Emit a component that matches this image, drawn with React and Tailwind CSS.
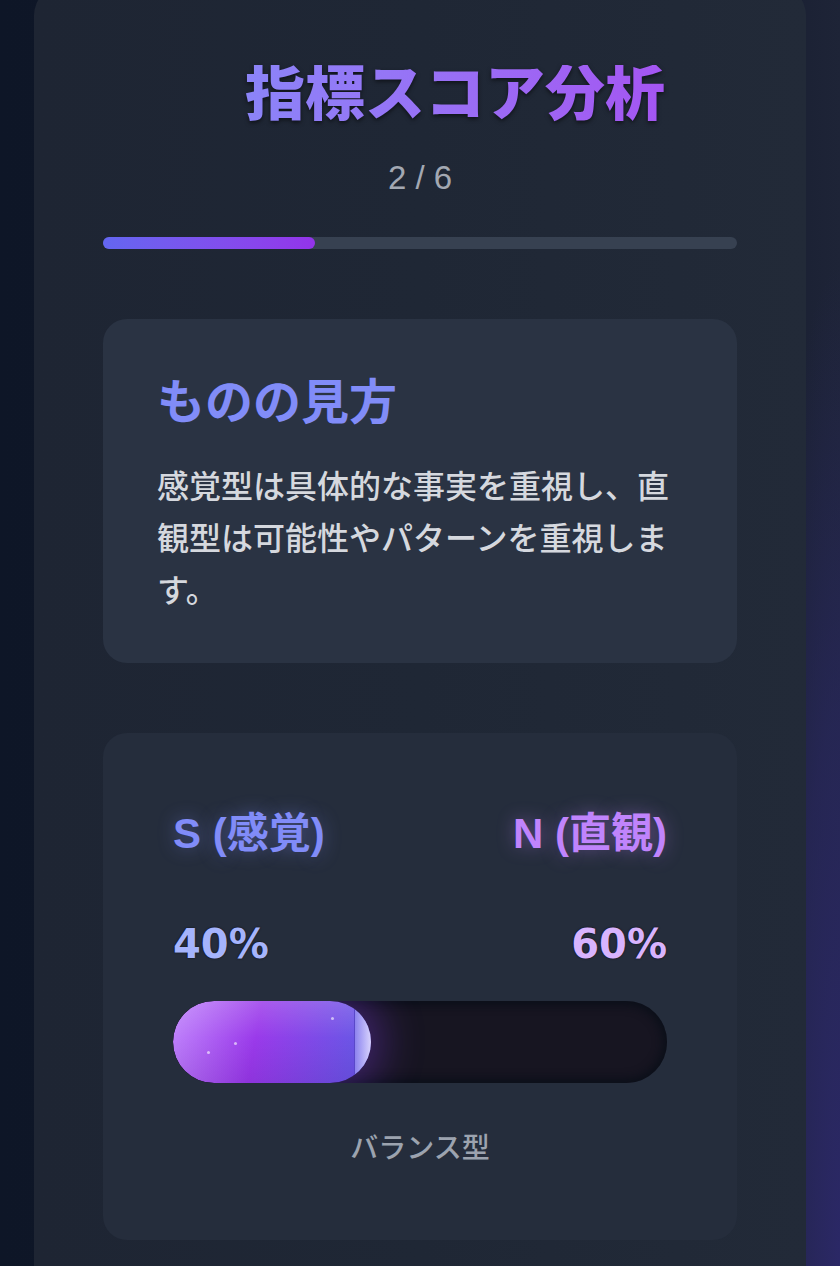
const S_PCT = 40;
const N_PCT = 60;

const sparkles = [
  { left: 34, top: 50 },
  { left: 61, top: 41 },
  { left: 158, top: 16 },
];

function ScoreBar({ value }) {
  return (
    <div className="relative h-[82px] overflow-hidden rounded-full bg-[#171521] shadow-[inset_0_0_10px_4px_rgba(8,14,24,0.85)]">
      <div
        className="relative h-full overflow-hidden rounded-full bg-[linear-gradient(180deg,rgba(255,255,255,0.16)_0%,rgba(255,255,255,0)_45%,rgba(60,0,120,0.12)_100%),linear-gradient(100deg,#c084fc_0%,#9a3aea_42%,#6c55e6_88%)] shadow-[0_0_40px_12px_rgba(126,58,220,0.4)]"
        style={{ width: `${value}%` }}
      >
        {sparkles.map((s, i) => (
          <span
            key={i}
            className="absolute h-[3px] w-[3px] rounded-full bg-white/60"
            style={{ left: s.left, top: s.top }}
          />
        ))}
        <span className="absolute inset-y-0 right-0 w-[17px] border-l border-[#5a48c9] bg-gradient-to-r from-[#8d82ee] to-[#d9d3fc]" />
      </div>
    </div>
  );
}

export default function App() {
  return (
    <div className="h-screen w-full overflow-hidden bg-[radial-gradient(90px_1000px_at_100%_100%,#2b2866_0%,rgba(43,40,102,0.6)_55%,rgba(43,40,102,0)_100%),linear-gradient(90deg,#0e1627_0%,#131a2c_80%,#1e2437_100%)] px-[34px] font-['Liberation_Sans','Noto_Sans_CJK_JP',sans-serif]">
      <div className="-mt-[16px] rounded-[32px] bg-[linear-gradient(90deg,#1e2533_0%,#1f2735_50%,#222a38_100%)] px-[69px] pt-[81px] pb-[80px]">
        <div className="flex justify-center pl-[70px]">
          <h1 className="bg-gradient-to-r from-[#8b84f8] to-[#a455f2] bg-clip-text text-[60px] font-black leading-none text-transparent drop-shadow-[0_2px_2px_rgba(0,0,0,0.55)]">
            指標スコア分析
          </h1>
        </div>
        <p className="mt-[36px] text-center text-[33px] leading-none text-[#a3a8b2]">2 / 6</p>

        <div className="mt-[43px] h-[12px] rounded-full bg-[#374151]">
          <div className="h-full w-[33.4%] rounded-full bg-gradient-to-r from-[#6366f1] to-[#9333ea]" />
        </div>

        <div className="mt-[70px] rounded-[24px] bg-[#2a3343] px-[54px] pt-[60px] pb-[46px]">
          <h2 className="text-[48px] font-bold leading-none text-[#818cf8]">ものの見方</h2>
          <p className="mt-[34px] text-[32px] font-medium leading-[52px] text-[#d5d8de]">
            感覚型は具体的な事実を重視し、直観型は可能性やパターンを重視します。
          </p>
        </div>

        <div className="mt-[70px] rounded-[24px] bg-[#252d3c] px-[70px] pt-[80px] pb-[77px]">
          <div className="flex items-center justify-between text-[42px] font-bold leading-none">
            <span className="text-[#818cf8] [text-shadow:0_0_18px_rgba(129,140,248,0.4)]">S (感覚)</span>
            <span className="text-[#c084fc] [text-shadow:0_0_18px_rgba(192,132,252,0.4)]">N (直観)</span>
          </div>
          <div className="mt-[69px] flex items-center justify-between font-['DejaVu_Sans',sans-serif] text-[40px] font-bold leading-none">
            <span className="text-[#a5b4fc] [text-shadow:0_0_2px_rgba(0,0,0,0.8)]">{S_PCT}%</span>
            <span className="text-[#d8b4fe] [text-shadow:0_0_2px_rgba(0,0,0,0.8)]">{N_PCT}%</span>
          </div>
          <div className="mt-[37px]">
            <ScoreBar value={S_PCT} />
          </div>
          <p className="mt-[52px] text-center text-[28px] font-medium leading-none text-[#9ca3af]">バランス型</p>
        </div>
      </div>
    </div>
  );
}
